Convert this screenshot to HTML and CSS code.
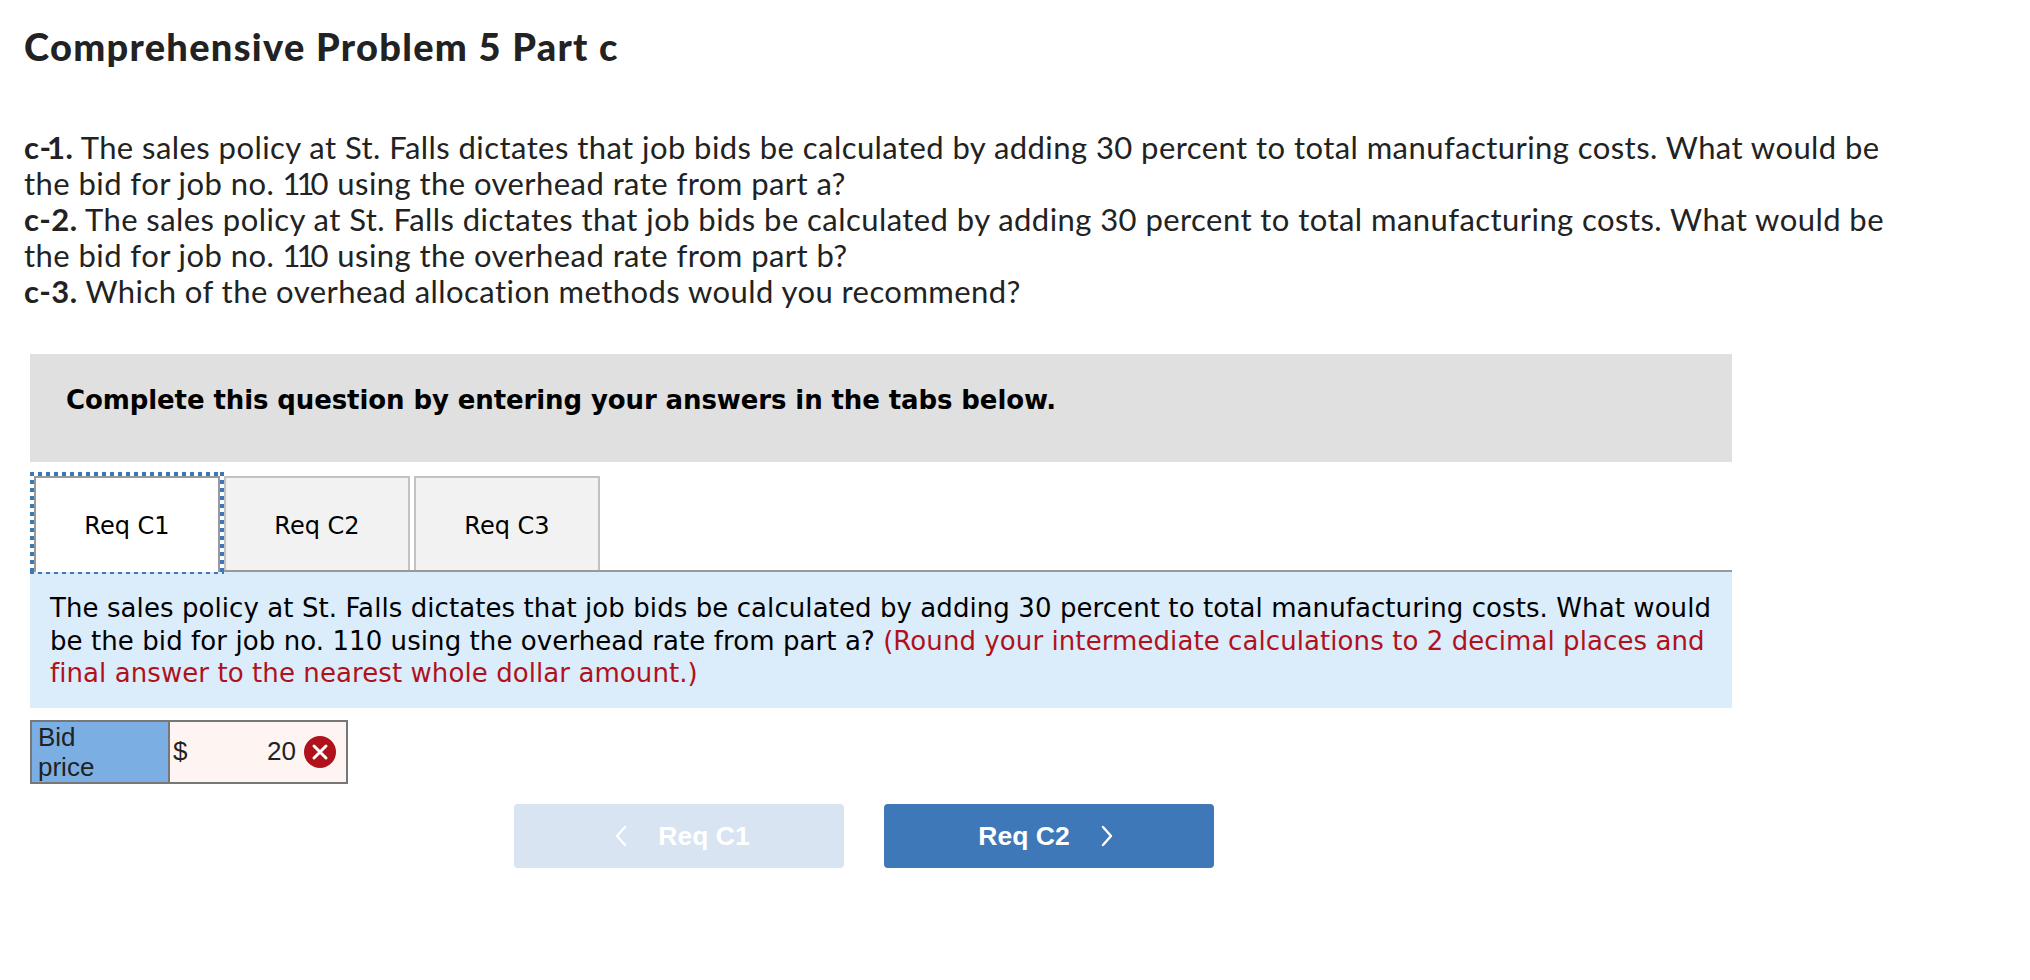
FILE: index.html
```html
<!DOCTYPE html>
<html>
<head>
  <title>Comprehensive Problem 5 Part c</title>
  <link rel="stylesheet" href="styles.css">
</head>
<body>
  <h1>Comprehensive Problem 5 Part c</h1>

  <p class="intro">
    <b>c<span class="tight">-</span>1.</b> The sales policy at St. Falls dictates that job bids be calculated by adding 30 percent to total manufacturing costs. What would be<br>
    the bid for job no. <span class="tight">11</span>0 using the overhead rate from part a?<br>
    <b>c-2.</b> The sales policy at St. Falls dictates that job bids be calculated by adding 30 percent to total manufacturing costs. What would be<br>
    the bid for job no. <span class="tight">11</span>0 using the overhead rate from part b?<br>
    <b>c-3.</b> Which of the overhead allocation methods would you recommend?
  </p>

  <div class="question">
    <div class="banner">Complete this question by entering your answers in the tabs below.</div>

    <div class="tabs">
      <button class="tab active">Req C1</button>
      <button class="tab">Req C2</button>
      <button class="tab">Req C3</button>
    </div>

    <div class="panel">
      The sales policy at St. Falls dictates that job bids be calculated by adding 30 percent to total manufacturing costs. What would<br>
      be the bid for job no. 110 using the overhead rate from part a? <span class="hint">(Round your intermediate calculations to 2 decimal places and<br>
      final answer to the nearest whole dollar amount.)</span>
    </div>

    <table class="answer">
      <tr>
        <th>Bid<br>price</th>
        <td>
          <div class="cell">
            <span>$</span>
            <span class="value">20</span>
            <svg class="wrong" width="32" height="32" viewBox="0 0 32 32">
              <circle cx="16" cy="16" r="16" fill="#b0121b"/>
              <path d="M10 10 L22 22 M22 10 L10 22" stroke="#fff" stroke-width="3" stroke-linecap="round"/>
            </svg>
          </div>
        </td>
      </tr>
    </table>

    <div class="nav">
      <button class="nav-btn prev disabled">
        <svg width="14" height="22" viewBox="0 0 14 22"><path d="M11 2 L3 11 L11 20" fill="none" stroke="#fff" stroke-width="2.4" stroke-linecap="round" stroke-linejoin="round"/></svg>
        Req C1
      </button>
      <button class="nav-btn next">
        Req C2
        <svg width="14" height="22" viewBox="0 0 14 22"><path d="M3 2 L11 11 L3 20" fill="none" stroke="#fff" stroke-width="2.4" stroke-linecap="round" stroke-linejoin="round"/></svg>
      </button>
    </div>
  </div>
</body>
</html>
```

FILE: styles.css
```css
body {
  margin: 0;
  padding: 24px 24px 0;
  background: white;
  font-family: "Lato", sans-serif;
  color: #222;
}
h1 {
  margin: -1px 0 60px;
  font-size: 38px;
  line-height: 46px;
  font-weight: 900;
  letter-spacing: 1.3px;
  white-space: nowrap;
}
.intro {
  margin: 0 0 45px;
  font-size: 31px;
  line-height: 36px;
  letter-spacing: 0.44px;
  white-space: nowrap;
}
/* the digit 1 sits much closer to its neighbours in the original face */
.tight {
  letter-spacing: -4px;
}
.question {
  margin-left: 6px;
  width: 1702px;
  font-family: "DejaVu Sans", sans-serif;
  color: #000;
}
.banner {
  height: 108px;
  box-sizing: border-box;
  padding: 30px 36px 0;
  background: #e0e0e0;
  font-size: 26px;
  line-height: 32px;
  font-weight: 700;
  letter-spacing: -0.1px;
}
.tabs {
  display: flex;
  align-items: flex-start;
  gap: 4px;
  height: 96px;
  box-sizing: border-box;
  margin-top: 14px;
  padding-left: 4px;
  border-bottom: 2px solid #999;
}
.tab {
  width: 186px;
  height: 94px;
  box-sizing: border-box;
  background: #f2f2f2;
  border: 2px solid #c2c2c2;
  border-bottom: none;
  font-family: "DejaVu Sans", sans-serif;
  font-size: 24px;
  color: #000;
  padding: 4px 0 0;
}
.tab.active {
  position: relative;
  height: 96px;
  margin-bottom: -2px;
  padding-top: 2px;
  background: white;
  border-color: #999;
}
/* square focus dots, thinner along the bottom edge */
.tab.active::after {
  content: "";
  position: absolute;
  top: -6px;
  left: -6px;
  right: -6px;
  bottom: -2px;
  background-image:
    repeating-linear-gradient(90deg, #3e78b8 0 4px, transparent 4px 8px),
    repeating-linear-gradient(90deg, #3e78b8 0 4px, transparent 4px 8px),
    repeating-linear-gradient(180deg, #3e78b8 0 4px, transparent 4px 8px),
    repeating-linear-gradient(180deg, #3e78b8 0 4px, transparent 4px 8px);
  background-size: 100% 4px, 100% 2px, 4px 100%, 4px 100%;
  background-position: top left, bottom left, top left, top right;
  background-repeat: no-repeat;
}
.panel {
  height: 136px;
  box-sizing: border-box;
  padding: 20px 20px 0;
  background: #dbecfa;
  font-size: 26px;
  line-height: 32.5px;
  letter-spacing: 0.08px;
  white-space: nowrap;
}
.hint {
  color: #b0121b;
}
.answer {
  margin-top: 12px;
  width: 318px;
  height: 64px;
  border-collapse: collapse;
  border: 2px solid #777;
  font-family: "Liberation Sans", sans-serif;
  font-size: 26px;
  line-height: 30px;
  color: #222;
}
.answer th {
  width: 130px;
  padding: 0 0 0 6px;
  background: #7bafe3;
  border-right: 2px solid #777;
  font-weight: normal;
  text-align: left;
}
.answer td {
  padding: 0 10px 0 3px;
  background: #fef5f3;
}
.cell {
  display: flex;
  align-items: center;
}
.cell span {
  margin-bottom: 3px;
}
.value {
  margin-left: auto;
  margin-right: 8px;
}
.wrong {
  display: block;
}
.nav {
  display: flex;
  gap: 40px;
  margin: 20px 0 0 484px;
}
.nav-btn {
  display: flex;
  align-items: center;
  justify-content: center;
  gap: 30px;
  width: 330px;
  height: 64px;
  border: none;
  border-radius: 4px;
  background: #3e78b8;
  color: white;
  font-family: "Liberation Sans", sans-serif;
  font-size: 26.5px;
  font-weight: 700;
  padding: 0;
}
.nav-btn.prev {
  padding-left: 6px;
}
.nav-btn.next {
  padding-right: 6px;
}
.nav-btn.disabled {
  background: #d8e4f1;
}
```
